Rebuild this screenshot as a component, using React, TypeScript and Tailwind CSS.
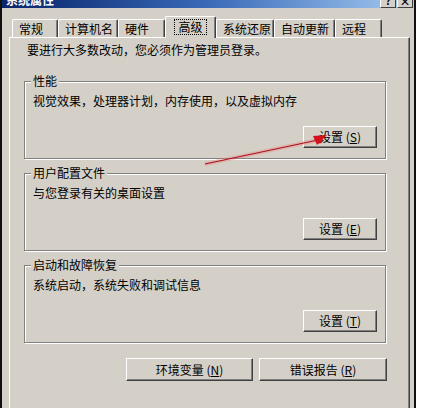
import React from "react";

const font = { fontFamily: '"Noto Sans CJK SC", "Noto Sans", sans-serif' };

function Btn({ label, acc, className }: { label: string; acc: string; className: string }) {
  return (
    <div
      className={
        "flex items-center justify-center bg-[#d4d0c8] border border-t-white border-l-white border-r-[#404040] border-b-[#404040] shadow-[inset_-1px_-1px_0_#808080] text-[12px] leading-[14px] text-black " +
        className
      }
    >
      <span>
        {label} (<span className="underline">{acc}</span>)
      </span>
    </div>
  );
}

function Group({
  title,
  desc,
  acc,
  className,
}: {
  title: string;
  desc: string;
  acc: string;
  className: string;
}) {
  return (
    <div
      className={
        "relative ml-[14px] w-[362px] h-[78px] border border-[#808080] shadow-[inset_1px_1px_0_#fff,1px_1px_0_#fff] flex flex-col pt-[12px] pl-[8px] pr-[8px] " +
        className
      }
    >
      <div className="absolute -top-[8px] left-[6px] px-[2px] bg-[#d4d0c8] text-[12px] leading-[14px] text-black">
        {title}
      </div>
      <div className="text-[12px] leading-[14px] text-black">{desc}</div>
      <div className="flex justify-end mt-[18px]">
        <Btn label="设置" acc={acc} className="w-[74px] h-[22px]" />
      </div>
    </div>
  );
}

const tabs = [
  { t: "常规", w: 46 },
  { t: "计算机名", w: 60 },
  { t: "硬件", w: 47 },
  { t: "高级", w: 51, sel: true },
  { t: "系统还原", w: 58 },
  { t: "自动更新", w: 61 },
  { t: "远程", w: 47 },
];

export default function App() {
  return (
    <div className="relative w-[423px] h-[408px] bg-white overflow-hidden" style={font}>
      <div className="w-[416px] h-[408px] bg-[#d4d0c8] border-l-2 border-r-2 border-[#111] flex flex-col">
        {/* title bar */}
        <div className="h-[8px] bg-gradient-to-r from-[#0a246a] via-[#3a6ab8] to-[#a6caf0] flex justify-between overflow-hidden">
          <div className="-mt-[7px] ml-[4px] text-white font-bold text-[12px] leading-[14px]">系统属性</div>
          <div className="flex gap-[1px] mr-[1px]">
            <div className="w-[16px] h-[14px] -mt-[6px] bg-[#d4d0c8] border border-t-white border-l-white border-r-[#404040] border-b-[#404040] flex items-center justify-center text-[10px] font-bold leading-none text-black">
              ?
            </div>
            <div className="w-[16px] h-[14px] -mt-[6px] bg-[#d4d0c8] border border-t-white border-l-white border-r-[#404040] border-b-[#404040] flex items-center justify-center text-[11px] font-bold leading-none text-black">
              ×
            </div>
          </div>
        </div>

        {/* tabs */}
        <div className="mt-[8px] h-[21px] flex items-end pl-[10px] relative z-10">
          {tabs.map((tb) =>
            tb.sel ? (
              <div
                key={tb.t}
                style={{ width: tb.w }}
                className="h-[22px] -mb-[1px] bg-[#d4d0c8] border-t border-l border-white border-r border-r-[#404040] rounded-t-[2px] flex items-start justify-center pt-[2px] shadow-[inset_-1px_0_0_#808080]"
              >
                <span className="border border-dotted border-black px-[3px] text-[12px] leading-[14px] text-black">
                  {tb.t}
                </span>
              </div>
            ) : (
              <div
                key={tb.t}
                style={{ width: tb.w }}
                className="h-[18px] border-t border-l border-white border-r border-r-[#404040] rounded-t-[2px] shadow-[inset_-1px_0_0_#808080] flex items-center pl-[6px] text-[12px] leading-[14px] text-black"
              >
                {tb.t}
              </div>
            )
          )}
        </div>

        {/* panel */}
        <div className="ml-[7px] w-[401px] flex-1 border-t border-l border-white border-r border-r-[#404040] shadow-[inset_-1px_0_0_#808080] flex flex-col">
          <div className="pt-[5px] pl-[17px] text-[12px] leading-[14px] text-black">
            要进行大多数改动，您必须作为管理员登录。
          </div>
          <Group
            title="性能"
            desc="视觉效果，处理器计划，内存使用，以及虚拟内存"
            acc="S"
            className="mt-[24px]"
          />
          <Group title="用户配置文件" desc="与您登录有关的桌面设置" acc="E" className="mt-[14px]" />
          <Group title="启动和故障恢复" desc="系统启动，系统失败和调试信息" acc="T" className="mt-[14px]" />
          <div className="flex justify-end gap-[6px] mt-[15px] w-[377px]">
            <Btn label="环境变量" acc="N" className="w-[127px] h-[23px]" />
            <Btn label="错误报告" acc="R" className="w-[128px] h-[23px]" />
          </div>
        </div>
      </div>

      {/* red annotation arrow */}
      <svg className="absolute left-0 top-0 pointer-events-none" width="423" height="408">
        <line x1="205" y1="164" x2="318" y2="140" stroke="rgba(240,120,120,0.35)" strokeWidth="4" />
        <line x1="205" y1="164" x2="318" y2="140" stroke="#a8141c" strokeWidth="1.2" />
        <polygon points="327,135 313,136 317,145" fill="#d4121a" />
        <circle cx="319" cy="140" r="3.5" fill="#d4121a" />
      </svg>
    </div>
  );
}
